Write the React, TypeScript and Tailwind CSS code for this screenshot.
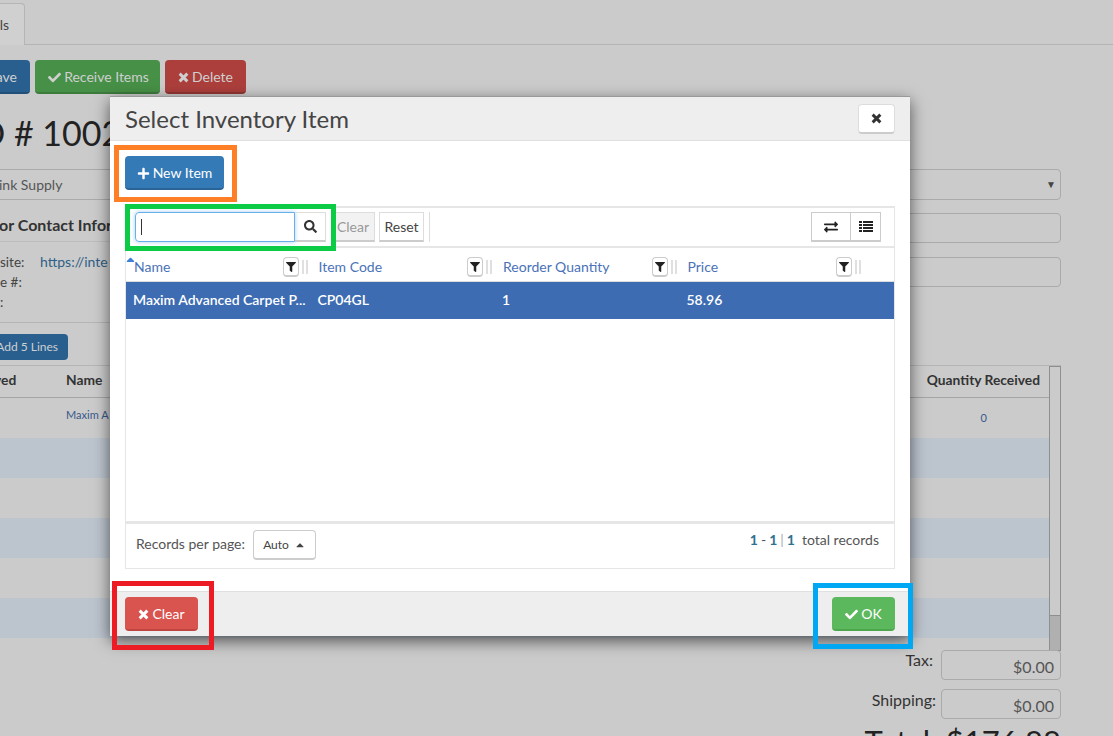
import React from 'react';
import { FaCaretUp, FaCheck, FaExchangeAlt, FaFilter, FaPlus, FaSearch } from 'react-icons/fa';

const columns = [
  { label: 'Name', cell: 'Maxim Advanced Carpet P...' },
  { label: 'Item Code', cell: 'CP04GL' },
  { label: 'Reorder Quantity', cell: '1' },
  { label: 'Price', cell: '58.96' },
];

const stripes = [false, true, false, true, false, true];

function CrossIcon() {
  return (
    <svg viewBox="0 0 12 12" className="w-[11px] h-[11px]" fill="none" stroke="currentColor" strokeWidth="3.2">
      <path d="M1.8 1.8 10.2 10.2M10.2 1.8 1.8 10.2" />
    </svg>
  );
}

function ListIcon() {
  return (
    <svg viewBox="0 0 14 12" className="w-[14px] h-[12px]" fill="currentColor">
      <path d="M0 0h3v2H0zM4 0h10v2H4zM0 3h3v2H0zM4 3h10v2H4zM0 6h3v2H0zM4 6h10v2H4zM0 9h3v2H0zM4 9h10v2H4z" />
    </svg>
  );
}

function BackgroundPage() {
  return (
    <div className="h-full flex flex-col">
      <div className="h-[45px] shrink-0 border-b border-[#b5b5b5] pt-[3px]">
        <div className="h-[42px] w-[25px] rounded-tr border-r border-t border-[#b5b5b5] bg-[#d0d0d0] flex items-center justify-end pr-[15px] text-sm text-[#444]">
          ls
        </div>
      </div>

      <div className="flex gap-[5px] mt-[15px] -ml-[20px] text-sm">
        <div className="w-[50px] h-[34px] pt-[2px] rounded bg-[#285f8f] border-b-2 border-[#224f77] text-[#cfcfcf] flex items-center justify-end pr-[13px]">ave</div>
        <div className="w-[125px] h-[34px] pt-[2px] pl-[2px] rounded bg-[#479047] border-b-2 border-[#3d7b3d] text-[#cfcfcf] flex items-center justify-center gap-[3px]">
          <FaCheck className="text-[13px]" /> Receive Items
        </div>
        <div className="w-[81px] h-[34px] pt-[2px] rounded bg-[#ac3f3c] border-b-2 border-[#933633] text-[#cfcfcf] flex items-center justify-center gap-[3px]">
          <CrossIcon /> Delete
        </div>
      </div>

      <div className="-ml-[22px] mt-[17px] h-[40px] text-[34px] leading-[44px] text-[#222] whitespace-nowrap">O # 1002</div>

      <div className="flex mt-[18px] h-[31px]">
        <div className="flex-1 border-y border-[#aaa] text-sm leading-[29px] text-[#555] overflow-hidden">
          <span className="-ml-[1px] block">ink Supply</span>
        </div>
        <div className="w-[200px] mr-[52px] border border-[#aaa] rounded-r flex items-center justify-end pr-[4px] text-[#444] text-[10px]">▼</div>
      </div>

      <div className="flex mt-[13px]">
        <div className="flex-1">
          <div className="-ml-[1px] text-base leading-[24px] font-bold text-[#333] whitespace-nowrap">or Contact Infor</div>
          <div className="mt-[4px] pt-[10px] border-t border-[#bdbdbd] text-[13.5px] leading-[20px] text-[#444]">
            <div className="flex"><span className="w-[40px]">site:</span><span className="text-[#2f5f86] text-sm">https://inte</span></div>
            <div>e #:</div>
            <div>:</div>
          </div>
          <div className="mt-[10px] border-t border-[#b5b5b5] pt-[11px] pb-[5px]">
            <div className="-ml-[10px] w-[78px] h-[26px] rounded bg-[#285f8f] text-[#cfcfcf] text-xs flex items-center justify-end pr-[10px]">Add 5 Lines</div>
          </div>
        </div>
        <div className="w-[200px] mr-[52px] flex flex-col gap-[14px]">
          <div className="h-[30px] border border-[#aaa] rounded-r"></div>
          <div className="h-[30px] border border-[#aaa] rounded-r"></div>
        </div>
      </div>

      <div className="flex mr-[52px] border-t border-[#b5b5b5]">
        <div className="flex-1">
          <div className="h-[32px] pb-[2px] border-b border-[#a5a5a5] text-[13.8px] font-bold text-[#333] flex items-center">
            <span className="w-[72px] -ml-[6px]">ved</span>
            <span>Name</span>
            <span className="ml-auto pr-[9px]">Quantity Received</span>
          </div>
          <div className="text-[11px]">
            {stripes.map((blue, i) => (
              <div key={i} className={`h-[40px] flex items-center ${blue ? 'bg-[#bcc4ce]' : ''}`}>
                {i === 0 && (
                  <>
                    <span className="ml-[66px] -mt-[6px] text-[#36598a]">Maxim A</span>
                    <span className="ml-auto mr-[62px] text-[#36598a]">0</span>
                  </>
                )}
              </div>
            ))}
          </div>
        </div>
        <div className="w-[12px] h-[285px] border border-[#8f8f8f] flex flex-col justify-end">
          <div className="h-[35px] bg-[#b0b0b0] border-t border-[#8f8f8f]"></div>
        </div>
      </div>
    </div>
  );
}

function Totals() {
  return (
    <div className="absolute right-[52px] top-[650px] flex flex-col items-end text-base text-[#333]">
      <div className="flex items-start gap-[8px]">
        <span className="-mt-[2px]">Tax:</span>
        <div className="w-[120px] h-[30px] border border-[#aaa] rounded-sm text-right pr-[6px] leading-[32px] text-[#555]">$0.00</div>
      </div>
      <div className="flex items-start gap-[5px] mt-[9px]">
        <span className="-mt-[1px]">Shipping:</span>
        <div className="w-[120px] h-[30px] border border-[#aaa] rounded-sm text-right pr-[6px] leading-[32px] text-[#555]">$0.00</div>
      </div>
      <div className="mt-[4px] text-[31px] leading-[36px] text-[#222] whitespace-nowrap">Total: $176.88</div>
    </div>
  );
}

function FilterButton() {
  return (
    <div className="ml-auto flex items-center gap-[3px] mr-[3px]">
      <span className="w-[16px] h-[20px] rounded-sm border border-[#ccc] border-b-2 bg-white flex items-center justify-center text-[#222] text-[10px]">
        <FaFilter />
      </span>
      <span className="w-[6px] h-[14px] border-x-2 border-[#e0e0e0]"></span>
    </div>
  );
}

function InventoryModal() {
  return (
    <div className="absolute left-[110px] top-[96px] w-[800px] h-[540px] bg-white border-t border-[#999] flex flex-col shadow-[0_5px_15px_rgba(0,0,0,0.6)]">
      <div className="h-[44px] shrink-0 bg-[#eeeeee] border-b border-[#e0e0e0] flex items-center justify-between px-[15px]">
        <h4 className="text-[24px] text-[#444] leading-none">Select Inventory Item</h4>
        <button className="w-[37px] h-[30px] bg-white border border-[#ddd] border-b-2 border-b-[#ccc] rounded-sm flex items-center justify-center text-[#333]">
          <CrossIcon />
        </button>
      </div>

      <div className="flex-1 px-[15px] pt-[15px]">
        <button className="w-[99px] h-[34px] pt-[2px] bg-[#337ab7] border-b-2 border-[#2a6496] rounded text-white text-sm flex items-center justify-center gap-[3px]">
          <FaPlus className="text-[13px]" /> New Item
        </button>

        <div className="mt-[16px] border-t-2 border-x border-b border-[#e6e6e6] h-[316px] flex flex-col">
          <div className="h-[40px] shrink-0 border-b-2 border-[#e6e6e6] flex items-center pl-[9px] pr-[13px]">
            <div className="w-[160px] h-[30px] border border-[#66afe9] rounded-l-sm shadow-[0_0_4px_rgba(102,175,233,0.6)] flex items-center pl-[5px]">
              <span className="w-[1px] h-[16px] bg-[#333]"></span>
            </div>
            <button className="w-[31px] h-[30px] border-r border-y border-[#ddd] border-b-2 border-b-[#ccc] flex items-center justify-center text-[#333] text-[13px]">
              <FaSearch />
            </button>
            <button className="ml-[5px] w-[44px] h-[30px] bg-[#f2f2f2] border border-[#ddd] border-b-2 border-b-[#ccc] text-[#999] text-sm">Clear</button>
            <button className="ml-[4px] w-[45px] h-[30px] bg-white border border-[#ddd] border-b-2 border-b-[#ccc] text-[#444] text-sm">Reset</button>
            <span className="ml-[5px] w-[1px] h-[30px] bg-[#ddd]"></span>
            <div className="ml-auto flex">
              <button className="w-[40px] h-[30px] border border-[#ccc] border-b-2 flex items-center justify-center text-[#222] text-[14px]">
                <FaExchangeAlt />
              </button>
              <button className="w-[30px] h-[30px] border border-[#ccc] border-l-0 border-b-2 flex items-center justify-center text-[#222]">
                <ListIcon />
              </button>
            </div>
          </div>

          <div className="h-[34px] shrink-0 pt-[5px] border-b border-[#ddd] grid grid-cols-[repeat(4,184.5px)] relative">
            <FaCaretUp className="absolute left-[-2px] top-[5px] text-[#3d7fd9] text-[13px]" />
            {columns.map(col => (
              <div key={col.label} className="flex items-center pl-[8px] text-sm text-[#4a72b8]">
                {col.label}
                <FilterButton />
              </div>
            ))}
          </div>

          <div className="h-[37px] shrink-0 pb-[2px] bg-[#3d6cb3] grid grid-cols-[repeat(4,184.5px)] text-white text-sm font-semibold">
            {columns.map(col => (
              <div key={col.label} className="flex items-center pl-[7px] whitespace-nowrap">{col.cell}</div>
            ))}
          </div>

          <div className="flex-1"></div>
        </div>

        <div className="h-[47px] border-x border-b border-t-2 border-[#e6e6e6] flex items-start justify-between pl-[10px] pr-[15px] pt-[6px] text-sm text-[#555]">
          <div className="flex items-center gap-[8px]">
            <span className="-mt-[3px]">Records per page:</span>
            <div className="w-[63px] h-[30px] border border-[#ccc] border-b-2 rounded-sm flex items-center justify-center gap-[5px] text-xs text-[#444]">
              Auto <FaCaretUp className="text-[12px]" />
            </div>
          </div>
          <div className="flex items-center">
            <span className="font-bold text-[#31708f]">1</span>
            <span className="mx-[3px]">-</span>
            <span className="font-bold text-[#31708f]">1</span>
            <span className="mx-[3px] text-[#aaa]">|</span>
            <span className="font-bold text-[#31708f]">1</span>
            <span className="ml-[7px]">total records</span>
          </div>
        </div>
      </div>

      <div className="h-[45px] shrink-0 bg-[#eeeeee] border-t border-[#e0e0e0] flex items-start justify-between px-[15px] pt-[5px]">
        <button className="w-[73px] h-[34px] pt-[2px] bg-[#d9534f] border-b-2 border-[#c0443f] rounded text-white text-sm flex items-center justify-center gap-[3px]">
          <CrossIcon /> Clear
        </button>
        <button className="w-[63px] h-[34px] pt-[2px] bg-[#5cb85c] border-b-2 border-[#4ca64c] rounded text-white text-sm flex items-center justify-center gap-[3px]">
          <FaCheck className="text-[13px]" /> OK
        </button>
      </div>
    </div>
  );
}

function Annotations() {
  return (
    <>
      <div className="absolute left-[114px] top-[145px] w-[123px] h-[57px] border-[5px] border-[#ff7f27]"></div>
      <div className="absolute left-[125px] top-[204px] w-[211px] h-[47px] border-[5px] border-[#0ccb45]"></div>
      <div className="absolute left-[112px] top-[581px] w-[102px] h-[69px] border-[5px] border-[#ed1c24]"></div>
      <div className="absolute left-[813px] top-[583px] w-[100px] h-[66px] border-[5px] border-[#00a8f3]"></div>
    </>
  );
}

export default function App() {
  return (
    <div className="relative w-[1113px] h-[736px] overflow-hidden bg-[#cbcbcb] font-['Lato',sans-serif]">
      <BackgroundPage />
      <Totals />
      <InventoryModal />
      <Annotations />
    </div>
  );
}
